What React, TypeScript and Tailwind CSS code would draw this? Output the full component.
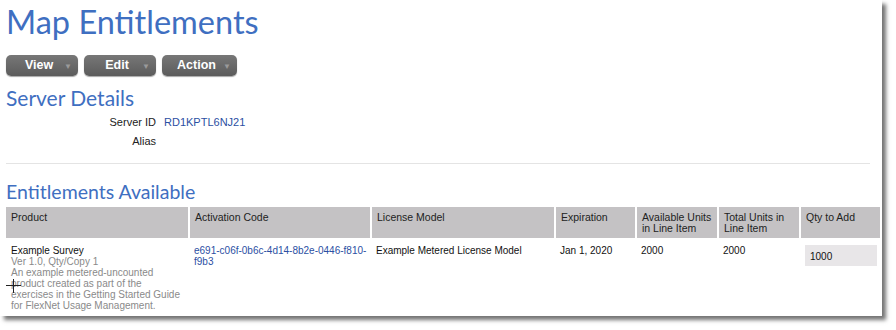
import React from 'react';

const headers = [
  { label: 'Product', w: 'w-[183px]' },
  { label: 'Activation Code', w: 'w-[182px]' },
  { label: 'License Model', w: 'w-[184px]' },
  { label: 'Expiration', w: 'w-[81px]' },
  { label: 'Available Units in Line Item', w: 'w-[82px]' },
  { label: 'Total Units in Line Item', w: 'w-[82px]' },
  { label: 'Qty to Add', w: 'w-[80px]' },
];

const MenuButton = ({ text, width }: { text: string; width: string }) => (
  <button
    className={`${width} h-[21px] flex items-center pl-[8px] pr-[6px] rounded-[5px] bg-gradient-to-b from-[#777] to-[#5c5c5c] shadow-[0_1px_1px_rgba(0,0,0,0.35)] text-white text-[12.5px] font-bold`}
  >
    <span className="flex-1 text-center">{text}</span>
    <span className="text-[8px] text-[#9a9a9a] mt-[3px]">▼</span>
  </button>
);

export default function App() {
  return (
    <div className="w-[896px] h-[330px] bg-white relative font-['Liberation_Sans',Arial,sans-serif]">
      {/* page panel with screenshot shadow */}
      <div className="w-[882px] h-[316px] bg-white shadow-[4px_4px_4px_rgba(0,0,0,0.55)] pl-[6px] pr-[2px] pt-[2px]">
        <h1 className="font-['Lato',sans-serif] text-[32.5px] leading-[40px] text-[#3f6fc1]">Map Entitlements</h1>

        <div className="flex gap-[6px] mt-[13px]">
          <MenuButton text="View" width="w-[72px]" />
          <MenuButton text="Edit" width="w-[72px]" />
          <MenuButton text="Action" width="w-[75px]" />
        </div>

        <h2 className="font-['Lato',sans-serif] text-[21px] leading-[26px] text-[#3f6fc1] mt-[9px]">Server Details</h2>

        <div className="text-[11px] leading-[19px] text-[#222] mt-[2px]">
          <div className="flex">
            <span className="w-[150px] text-right">Server ID</span>
            <span className="ml-[8px] text-[#2b4fa3]">RD1KPTL6NJ21</span>
          </div>
          <div className="flex">
            <span className="w-[150px] text-right">Alias</span>
          </div>
        </div>

        <div className="h-px bg-[#e4e4e4] mt-[12px] mr-[10px]" />

        <h2 className="font-['Lato',sans-serif] text-[19.5px] leading-[24px] text-[#3f6fc1] mt-[16px]">Entitlements Available</h2>

        <table className="border-collapse mt-[3px] text-[10px] leading-[11px]">
          <thead>
            <tr className="bg-[#c4c2c4] h-[31px]">
              {headers.map((h, i) => (
                <th
                  key={h.label}
                  className={`${h.w} align-top text-left font-normal text-[10.5px] leading-[11px] text-[#222] pl-[5px] pr-[4px] pt-[5px] ${i > 0 ? 'border-l-2 border-white' : ''}`}
                >
                  {h.label}
                </th>
              ))}
            </tr>
          </thead>
          <tbody>
            <tr className="align-top">
              <td className="pl-[5px] pt-[7px]">
                <div className="text-[#111]">Example Survey</div>
                <div className="text-[#8a8a8a]">Ver 1.0, Qty/Copy 1</div>
                <div className="text-[#8a8a8a] w-[172px]">
                  An example metered-uncounted product created as part of the exercises in the Getting Started Guide for FlexNet Usage Management.
                </div>
              </td>
              <td className="pl-[5px] pt-[7px] text-[#2b4fa3]">e691-c06f-0b6c-4d14-8b2e-0446-f810-f9b3</td>
              <td className="pl-[5px] pt-[7px] text-[#111]">Example Metered License Model</td>
              <td className="pl-[5px] pt-[7px] text-[#111]">Jan 1, 2020</td>
              <td className="pl-[5px] pt-[7px] text-[#111]">2000</td>
              <td className="pl-[5px] pt-[7px] text-[#111]">2000</td>
              <td className="pl-[5px] pt-[6px]">
                <div className="w-[72px] h-[21px] bg-[#e8e6e8] text-[#111] pl-[5px] pt-[6px] mt-[1px]">1000</div>
              </td>
            </tr>
          </tbody>
        </table>
      </div>

      {/* mouse cursor overlay */}
      <div className="absolute left-[6px] top-[279px] w-[15px] h-[14px]">
        <div className="absolute left-[7px] top-0 w-px h-[14px] bg-[#222]" />
        <div className="absolute left-0 top-[6px] w-[15px] h-px bg-[#222]" />
      </div>
    </div>
  );
}
